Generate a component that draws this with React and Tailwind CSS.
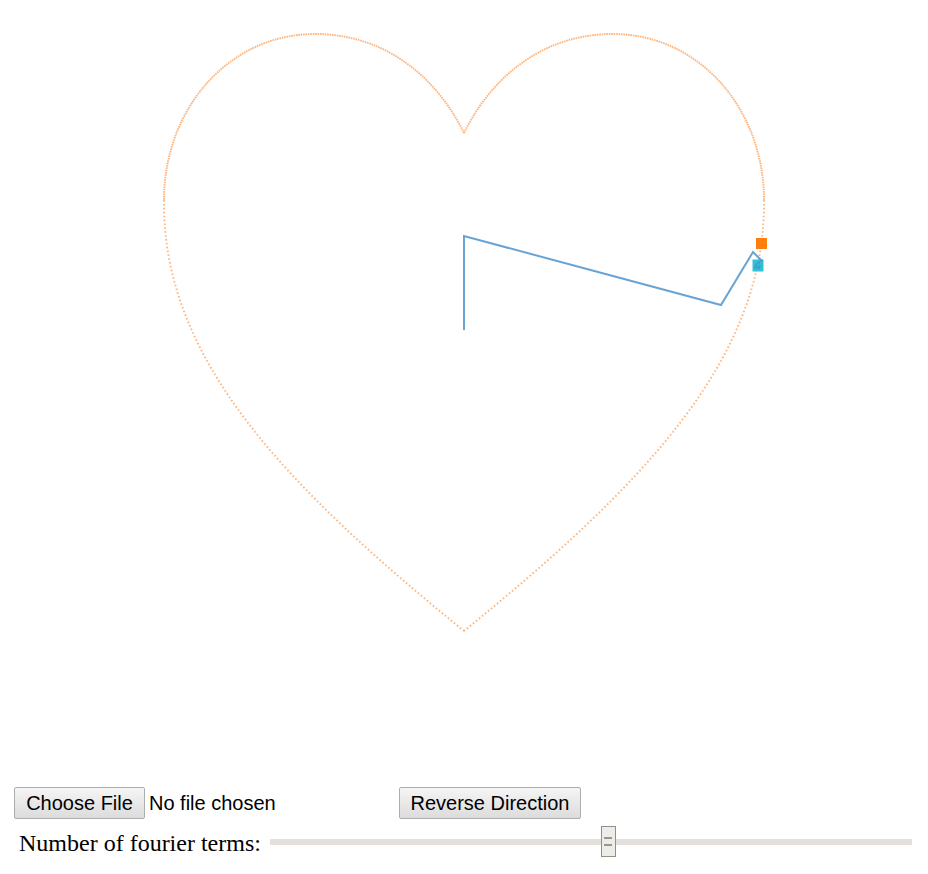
import React from "react";

const m = (x) => 928 - x;

const rightUpperD = "M464,133 C490,80 540,34 613,34 C700,34 764,110 764,200";
const rightLowerD = "M764,200 C766,360 640,488 464,631";
const leftUpperD = `M464,133 C${m(490)},80 ${m(540)},34 ${m(613)},34 C${m(700)},34 ${m(764)},110 ${m(764)},200`;
const leftLowerD = `M${m(764)},200 C${m(766)},360 ${m(640)},488 464,631`;

export default function App() {
  const arial = { fontFamily: '"Liberation Sans", Arial, sans-serif' };
  return (
    <div className="w-[928px] h-[874px] bg-white overflow-hidden">
      <svg width="928" height="787" className="block">
        <g fill="none" stroke="#ffa35e" strokeOpacity="0.8" strokeWidth="1.9">
          <path d={rightUpperD} strokeDasharray="1.6 0.8" />
          <path d={leftUpperD} strokeDasharray="1.6 0.8" />
          <path d={rightLowerD} strokeDasharray="1.6 2.3" />
          <path d={leftLowerD} strokeDasharray="1.6 2.3" />
        </g>
        <rect x="756" y="238" width="11" height="11" fill="#ff7f0e" />
        <rect x="752.5" y="259.5" width="11" height="12" fill="#22c0d4" opacity="0.95" />
        <polyline
          points="464,330 464,236 721,305 753,252 761.5,260.5 757,264 755,267 759,268 760,265"
          fill="none"
          stroke="#4f93cc"
          strokeOpacity="0.85"
          strokeWidth="2"
          strokeLinejoin="miter"
        />
      </svg>
      <div className="flex items-center h-[32px] pl-[14px]" style={arial}>
        <button className="h-[32px] w-[131px] border border-[#adadad] rounded-[2px] bg-gradient-to-b from-[#f5f5f5] to-[#dcdcdc] text-[20px] text-black leading-none">
          Choose File
        </button>
        <span className="ml-[4px] w-[250px] text-[20px] text-black leading-none">No file chosen</span>
        <button className="h-[32px] w-[182px] border border-[#adadad] rounded-[2px] bg-gradient-to-b from-[#f5f5f5] to-[#dcdcdc] text-[20px] text-black leading-none">
          Reverse Direction
        </button>
      </div>
      <div className="flex items-center h-[32px] mt-[7px] pl-[19px] pr-[16px]">
        <span
          className="text-[24px] text-black leading-none mt-[1px]"
          style={{ fontFamily: '"Liberation Serif", "Times New Roman", serif' }}
        >
          Number of fourier terms:
        </span>
        <div className="relative flex-1 ml-[9px] h-[32px] flex items-center">
          <div className="w-full h-[6px] bg-[#e3dfda]" />
          <div className="absolute left-[331px] top-0 w-[15px] h-[31px] border border-[#948e89] bg-[#eeece9] flex flex-col items-center justify-center gap-[5px]">
            <div className="w-[8px] h-[2px] bg-[#9b958f]" />
            <div className="w-[8px] h-[2px] bg-[#9b958f]" />
          </div>
        </div>
      </div>
    </div>
  );
}
